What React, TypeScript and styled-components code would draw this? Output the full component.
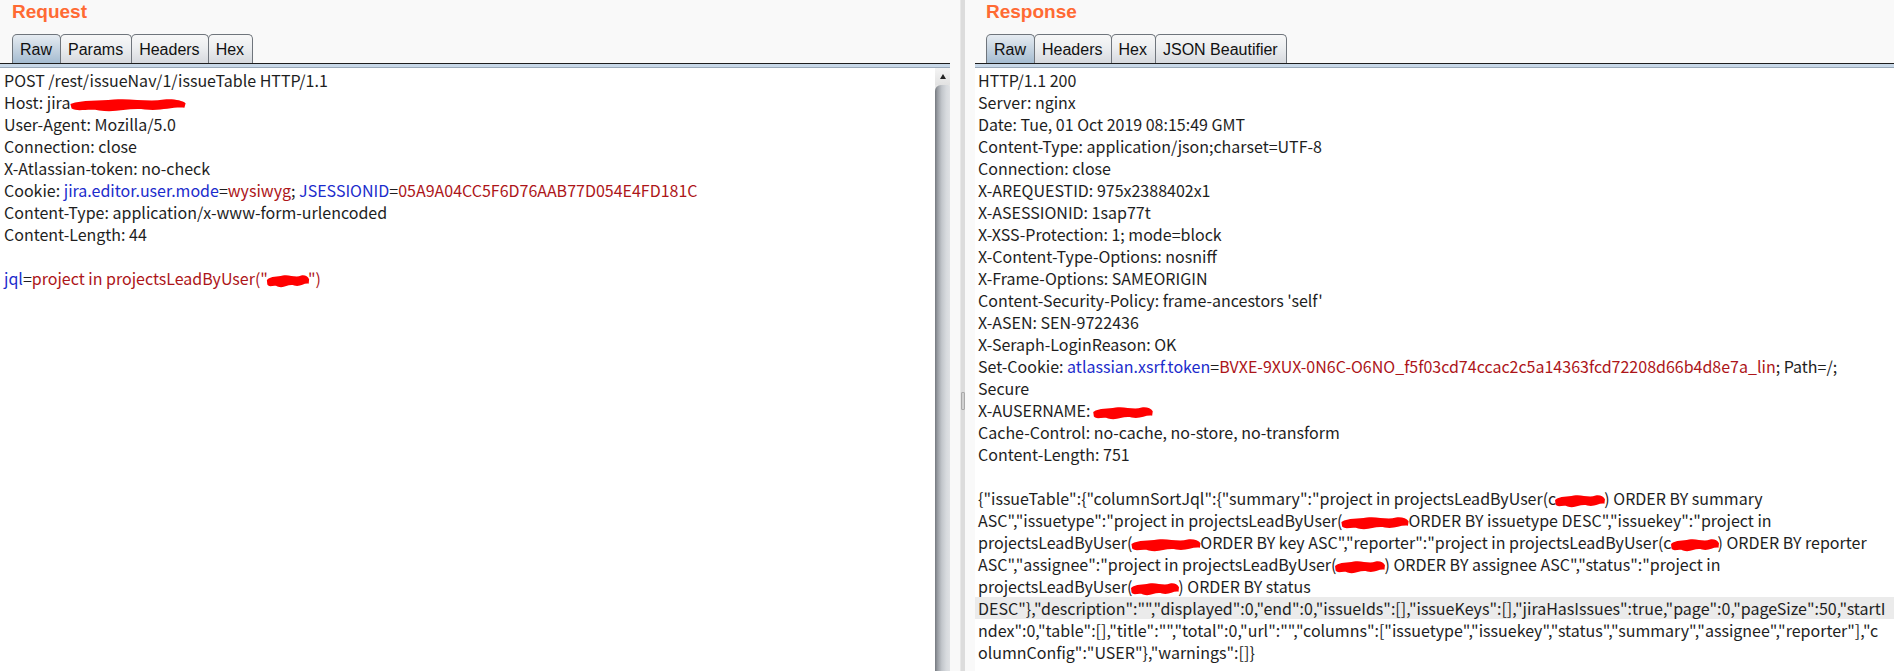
import React from "react";
import styled, { createGlobalStyle, css } from "styled-components";

const GlobalStyle = createGlobalStyle`
  html, body {
    margin: 0;
    padding: 0;
    background: #f9f9f9;
    overflow: hidden;
  }
`;

const Page = styled.div`
  display: grid;
  grid-template-columns: 950px 25px 1fr;
  width: 1894px;
  height: 671px;
  background: #f9f9f9;
`;

const Panel = styled.section`
  display: flex;
  flex-direction: column;
  min-width: 0;
  height: 671px;
`;

const PanelHeader = styled.div<{ $inset: number }>`
  display: flex;
  flex-direction: column;
  height: 63px;
  padding-left: ${({ $inset }) => $inset}px;
  background: #f9f9f9;
`;

const Title = styled.h2`
  margin: 1px 0 0;
  font-family: "Liberation Sans", Arial, sans-serif;
  font-size: 19px;
  font-weight: bold;
  line-height: 22px;
  color: #ff6a33;
`;

const TabRow = styled.div`
  display: flex;
  margin-top: auto;
`;

const Tab = styled.div<{ $active?: boolean }>`
  box-sizing: border-box;
  height: 29px;
  padding: 2px 8px 0 7px;
  margin-right: -1px;
  line-height: 26px;
  font-family: "Liberation Sans", Arial, sans-serif;
  font-size: 16px;
  color: #111;
  border: 1px solid #6f757c;
  border-bottom: none;
  border-radius: 5px 5px 0 0;
  background: linear-gradient(to bottom, #f8f8f8 0%, #eceef0 45%, #d6d9de 100%);
  ${({ $active }) =>
    $active &&
    css`
      background: linear-gradient(to bottom, #e6ecf2 0%, #c9d6e2 45%, #a5bcd1 100%);
    `}
`;

const Rule = styled.div`
  height: 3px;
  border-top: 1px solid #1d1d1d;
  border-bottom: 1px solid #9aa9b9;
  background: #c8d8e8;
`;

const Body = styled.div`
  flex: 1;
  display: flex;
  min-height: 0;
  background: #fff;
`;

const TextArea = styled.div<{ $pad: number }>`
  flex: 1;
  min-width: 0;
  overflow: hidden;
  padding: 1px 0 0 0;
  font-family: "Noto Sans CJK SC", "Noto Sans", sans-serif;
  font-size: 16px;
  color: #1e1e1e;

  & > div {
    padding-left: ${({ $pad }) => $pad}px;
  }
`;

const Line = styled.div<{ $hl?: boolean }>`
  height: 22px;
  line-height: 22px;
  white-space: pre;
  background: ${({ $hl }) => ($hl ? "#ebebeb" : "transparent")};
`;

const Key = styled.span`
  color: #1c2ccc;
`;

const Val = styled.span`
  color: #ad1519;
`;

const RedactBox = styled.span<{ $w: number }>`
  position: relative;
  display: inline-block;
  width: ${({ $w }) => $w}px;
  height: 16px;
  vertical-align: -4px;

  svg {
    position: absolute;
    left: -2px;
    top: -1px;
    width: calc(100% + 4px);
    height: 18px;
  }
`;

const Redact = ({ w }: { w: number }) => (
  <RedactBox $w={w}>
    <svg viewBox="0 0 100 20" preserveAspectRatio="none">
      <path
        d="M2 9 C12 4 26 6 38 4 C52 2 66 7 80 4 C88 3 95 5 98 8 L97 13 C86 12 78 17 64 15 C50 13 40 19 26 16 C16 14 8 18 3 14 Z"
        fill="#ff0000"
      />
    </svg>
  </RedactBox>
);

const Scrollbar = styled.div`
  display: flex;
  flex-direction: column;
  width: 15px;
  background: #e8e8e8;
`;

const ScrollButton = styled.div`
  display: flex;
  justify-content: center;
  align-items: flex-start;
  height: 17px;
  padding-top: 6px;
  box-sizing: border-box;
  background: linear-gradient(to bottom, #f4f4f4, #e2e2e2);
`;

const Arrow = styled.div`
  width: 0;
  height: 0;
  border-left: 3px solid transparent;
  border-right: 3px solid transparent;
  border-bottom: 5px solid #222;
`;

const ScrollThumb = styled.div`
  flex: 1;
  border-radius: 6px 2px 0 0;
  background: linear-gradient(
    to right,
    #75797f 0%,
    #9a9ea4 18%,
    #c2c6cb 45%,
    #d7dade 75%,
    #dfe1e4 100%
  );
`;

const Divider = styled.div`
  display: flex;
  justify-content: center;
  align-items: center;
  background: #f9f9f9;
`;

const DividerLine = styled.div`
  width: 4px;
  height: 100%;
  margin-right: 1px;
  display: flex;
  align-items: center;
  background: #dcdcdc;
  border-left: 1px solid #e8e8e8;
`;

const Grip = styled.div`
  width: 2px;
  height: 16px;
  margin: 130px 0 0 0;
  border: 1px solid #a9a9a9;
  border-radius: 1px;
  background: #d0d0d0;
`;

const requestLines: React.ReactNode[] = [
  "POST /rest/issueNav/1/issueTable HTTP/1.1",
  <>
    Host: jira
    <Redact w={116} />
  </>,
  "User-Agent: Mozilla/5.0",
  "Connection: close",
  "X-Atlassian-token: no-check",
  <>
    Cookie: <Key>jira.editor.user.mode</Key>=<Val>wysiwyg</Val>; <Key>JSESSIONID</Key>=
    <Val>05A9A04CC5F6D76AAB77D054E4FD181C</Val>
  </>,
  "Content-Type: application/x-www-form-urlencoded",
  "Content-Length: 44",
  "",
  <>
    <Key>jql</Key>=<Val>project in projectsLeadByUser("</Val>
    <Redact w={40} />
    <Val>")</Val>
  </>,
];

const responseLines: React.ReactNode[] = [
  "HTTP/1.1 200",
  "Server: nginx",
  "Date: Tue, 01 Oct 2019 08:15:49 GMT",
  "Content-Type: application/json;charset=UTF-8",
  "Connection: close",
  "X-AREQUESTID: 975x2388402x1",
  "X-ASESSIONID: 1sap77t",
  "X-XSS-Protection: 1; mode=block",
  "X-Content-Type-Options: nosniff",
  "X-Frame-Options: SAMEORIGIN",
  "Content-Security-Policy: frame-ancestors 'self'",
  "X-ASEN: SEN-9722436",
  "X-Seraph-LoginReason: OK",
  <>
    Set-Cookie: <Key>atlassian.xsrf.token</Key>=
    <Val>BVXE-9XUX-0N6C-O6NO_f5f03cd74ccac2c5a14363fcd72208d66b4d8e7a_lin</Val>; Path=/;
  </>,
  "Secure",
  <>
    X-AUSERNAME: <Redact w={58} />
  </>,
  "Cache-Control: no-cache, no-store, no-transform",
  "Content-Length: 751",
  "",
  <>
    {'{"issueTable":{"columnSortJql":{"summary":"project in projectsLeadByUser(c'}
    <Redact w={48} />
    {") ORDER BY summary"}
  </>,
  <>
    {'ASC","issuetype":"project in projectsLeadByUser('}
    <Redact w={66} />
    {'ORDER BY issuetype DESC","issuekey":"project in'}
  </>,
  <>
    {"projectsLeadByUser("}
    <Redact w={68} />
    {'ORDER BY key ASC","reporter":"project in projectsLeadByUser(c'}
    <Redact w={46} />
    {") ORDER BY reporter"}
  </>,
  <>
    {'ASC","assignee":"project in projectsLeadByUser('}
    <Redact w={48} />
    {') ORDER BY assignee ASC","status":"project in'}
  </>,
  <>
    {"projectsLeadByUser("}
    <Redact w={46} />
    {") ORDER BY status"}
  </>,
  'DESC"},"description":"","displayed":0,"end":0,"issueIds":[],"issueKeys":[],"jiraHasIssues":true,"page":0,"pageSize":50,"startI',
  'ndex":0,"table":[],"title":"","total":0,"url":"","columns":["issuetype","issuekey","status","summary","assignee","reporter"],"c',
  'olumnConfig":"USER"},"warnings":[]}',
];

const HIGHLIGHT_ROW = 24;

export default function App() {
  return (
    <>
      <GlobalStyle />
      <Page>
        <Panel>
          <PanelHeader $inset={12}>
            <Title>Request</Title>
            <TabRow>
              <Tab $active>Raw</Tab>
              <Tab>Params</Tab>
              <Tab>Headers</Tab>
              <Tab>Hex</Tab>
            </TabRow>
          </PanelHeader>
          <Rule />
          <Body>
            <TextArea $pad={4}>
              {requestLines.map((l, i) => (
                <Line key={i}>{l}</Line>
              ))}
            </TextArea>
            <Scrollbar>
              <ScrollButton>
                <Arrow />
              </ScrollButton>
              <ScrollThumb />
            </Scrollbar>
          </Body>
        </Panel>

        <Divider>
          <DividerLine>
            <Grip />
          </DividerLine>
        </Divider>

        <Panel>
          <PanelHeader $inset={11}>
            <Title>Response</Title>
            <TabRow>
              <Tab $active>Raw</Tab>
              <Tab>Headers</Tab>
              <Tab>Hex</Tab>
              <Tab>JSON Beautifier</Tab>
            </TabRow>
          </PanelHeader>
          <Rule />
          <Body>
            <TextArea $pad={3}>
              {responseLines.map((l, i) => (
                <Line key={i} $hl={i === HIGHLIGHT_ROW}>
                  {l}
                </Line>
              ))}
            </TextArea>
          </Body>
        </Panel>
      </Page>
    </>
  );
}
